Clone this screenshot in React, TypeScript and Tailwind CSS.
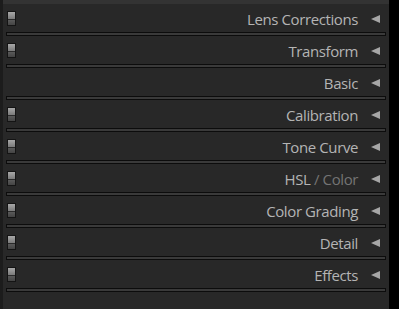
const panels = [
  { label: 'Lens Corrections', toggle: true },
  { label: 'Transform', toggle: true },
  { label: 'Basic', toggle: false },
  { label: 'Calibration', toggle: true },
  { label: 'Tone Curve', toggle: true },
  { label: 'HSL', extra: 'Color', toggle: true },
  { label: 'Color Grading', toggle: true },
  { label: 'Detail', toggle: true },
  { label: 'Effects', toggle: true },
]

function Toggle() {
  return (
    <div className="ml-[4px] flex h-[15px] w-[9px] flex-col border border-[#141414] bg-[#555]">
      <div className="h-[7px] bg-gradient-to-b from-[#a8a8a8] to-[#7a7a7a]" />
      <div className="h-px bg-[#2a2a2a]" />
      <div className="flex-1 bg-gradient-to-b from-[#5a5a5a] to-[#444]" />
    </div>
  )
}

export default function App() {
  return (
    <div className="flex h-[309px] w-[399px] bg-black" style={{ fontFamily: '"Open Sans", "Liberation Sans", sans-serif' }}>
      <div className="flex w-[389px] flex-col border-l-[3px] border-[#1c1c1c] bg-[#282828]">
        <div className="h-[4px] bg-[#333]" />
        {panels.map((p) => (
          <div key={p.label}>
            <div className="flex h-[28px] items-center">
              {p.toggle ? <Toggle /> : null}
              <div className="flex-1 pt-[2px] text-right text-[15px] leading-none tracking-[-0.4px] text-[#b4b4b4]">
                {p.label}
                {p.extra && <span className="text-[#747474]"> / {p.extra}</span>}
              </div>
              <svg width="9" height="8" viewBox="0 0 9 8" className="ml-[13px] mr-[9px] mt-[1px]">
                <polygon points="0,4 9,0 9,8" fill="#a6a6a6" />
              </svg>
            </div>
            <div className="ml-[3px] mr-[3px] h-[4px] border border-[#0c0c0c] bg-[#3a3a3a]" />
          </div>
        ))}
      </div>
    </div>
  )
}
